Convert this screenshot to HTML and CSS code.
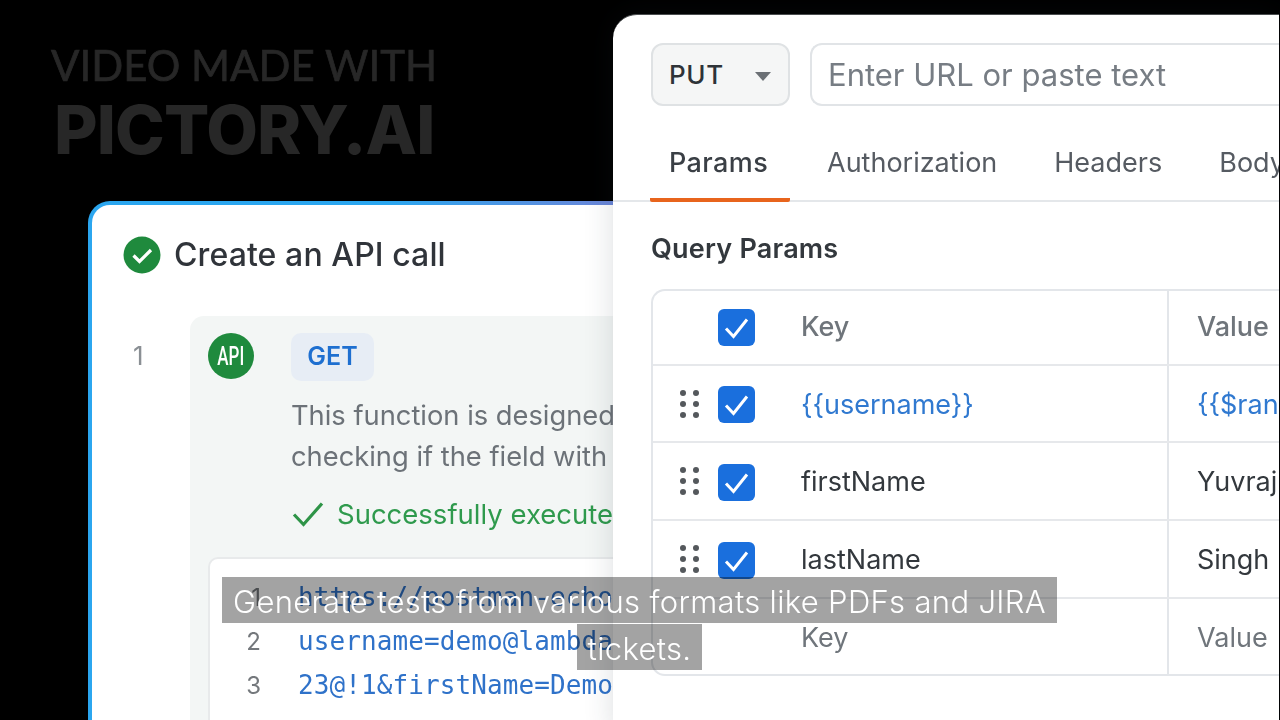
FILE: index.html
```html
<!DOCTYPE html>
<html lang="en">
<head>
<meta charset="utf-8">
<title>Generate tests</title>
<link rel="stylesheet" href="styles.css">
</head>
<body>
<main class="stage">
  <div class="watermark">
    <div class="wm-top">VIDEO MADE WITH</div>
    <div class="wm-bottom">PICTORY.AI</div>
  </div>

  <section class="card">
    <header class="card-head">
      <svg class="head-check" viewBox="0 0 38 38"><circle cx="19" cy="19" r="18.500" fill="#1f8a3d"/><path d="M10.500 19.500l6 6L28 14" fill="none" stroke="#fff" stroke-width="3.200"/></svg>
      <h2 class="card-title">Create an API call</h2>
    </header>
    <div class="step">
      <div class="step-num">1</div>
      <div class="step-box">
        <div class="step-top">
          <div class="api-icon"><span>API</span></div>
          <div class="get">GET</div>
        </div>
        <p class="desc">This function is designed to validate a form by<br>checking if the field with the given name exists</p>
        <div class="success">
          <svg class="ok" viewBox="0 0 32 26"><path d="M2 13.500l9.500 10L30 2.500" fill="none" stroke="#2e9447" stroke-width="3.200"/></svg>
          <span>Successfully executed the request</span>
        </div>
        <div class="code">
          <div class="code-line"><span class="ln">1</span><span class="src">https://postman-echo.com/get?</span></div>
          <div class="code-line"><span class="ln">2</span><span class="src">username=demo@lambdatest.com&amp;password=</span></div>
          <div class="code-line"><span class="ln">3</span><span class="src">23@!1&amp;firstName=Demo&amp;lastName=User</span></div>
        </div>
      </div>
    </div>
  </section>

  <section class="panel">
    <div class="request">
      <div class="method">PUT<svg class="caret" viewBox="0 0 18 10"><path d="M0 0h18L9 10z" fill="#6b7075"/></svg></div>
      <div class="url">Enter URL or paste text</div>
    </div>
    <nav class="tabs">
      <div class="tab active">Params</div>
      <div class="tab">Authorization</div>
      <div class="tab">Headers</div>
      <div class="tab">Body</div>
    </nav>
    <h3 class="qp">Query Params</h3>
    <div class="table">
      <div class="row head-row">
        <div class="c-key"><span class="box"><svg viewBox="0 0 37 37"><path d="M8 19.500l7.500 8L29 10.500" fill="none" stroke="#fff" stroke-width="3"/></svg></span><span class="k muted strong">Key</span></div>
        <div class="c-val muted strong">Value</div>
      </div>
      <div class="row first">
        <div class="c-key"><span class="grip"><i></i><i></i><i></i><i></i><i></i><i></i></span><span class="box"><svg viewBox="0 0 37 37"><path d="M8 19.500l7.500 8L29 10.500" fill="none" stroke="#fff" stroke-width="3"/></svg></span><span class="k var">{{username}}</span></div>
        <div class="c-val var">{{$randomFirstName}}</div>
      </div>
      <div class="row">
        <div class="c-key"><span class="grip"><i></i><i></i><i></i><i></i><i></i><i></i></span><span class="box"><svg viewBox="0 0 37 37"><path d="M8 19.500l7.500 8L29 10.500" fill="none" stroke="#fff" stroke-width="3"/></svg></span><span class="k">firstName</span></div>
        <div class="c-val">Yuvraj</div>
      </div>
      <div class="row">
        <div class="c-key"><span class="grip"><i></i><i></i><i></i><i></i><i></i><i></i></span><span class="box"><svg viewBox="0 0 37 37"><path d="M8 19.500l7.500 8L29 10.500" fill="none" stroke="#fff" stroke-width="3"/></svg></span><span class="k">lastName</span></div>
        <div class="c-val">Singh</div>
      </div>
      <div class="row last">
        <div class="c-key"><span class="k muted">Key</span></div>
        <div class="c-val muted">Value</div>
      </div>
    </div>
  </section>

  <div class="caption"><span>Generate tests from various formats like PDFs and JIRA tickets.</span></div>
</main>
</body>
</html>
```

FILE: styles.css
```css
* { box-sizing: border-box; }
html, body { margin: 0; height: 100%; background: #000; }
body { overflow: hidden; }
.stage {
  position: relative;
  width: 1280px;
  height: 720px;
  overflow: hidden;
  background: #000;
  font-family: Inter, "Liberation Sans", sans-serif;
}
.card, .panel, .watermark { filter: blur(.45px); }

.watermark { position: absolute; left: 51px; top: 40px; color: #272727; }
.wm-top { font-family: Lato, sans-serif; font-size: 42px; line-height: 50px; -webkit-text-stroke: .7px #272727; }
.wm-bottom { font-family: Inter, sans-serif; font-weight: 800; font-size: 67px; line-height: 76px; margin: 2px 0 0 3px; letter-spacing: -.9px; }

.card {
  position: absolute;
  left: 88px;
  top: 201px;
  width: 760px;
  height: 560px;
  background: linear-gradient(#fff, #fff) padding-box, linear-gradient(90deg, #2ba6ef 0, #2ba6ef 300px, #6c86d8 525px) border-box;
  border: 4px solid transparent;
  border-right: 0;
  border-radius: 22px 0 0 0;
}
.card-head { display: flex; align-items: center; gap: 13px; padding: 31px 0 0 31px; }
.head-check { width: 38px; height: 38px; flex: none; }
.card-title { margin: 0; font-size: 32px; line-height: 38px; font-weight: 500; letter-spacing: .1px; color: #30343a; }
.step { display: flex; margin-top: 42px; }
.step-num { width: 98px; flex: none; padding: 24px 0 0 41px; font-size: 26px; line-height: 32px; color: #8a8f94; }
.step-box { flex: 1; min-width: 0; background: #f3f6f5; border-radius: 14px 0 0 0; padding: 17px 0 0 18px; height: 420px; }
.step-top { display: flex; gap: 37px; align-items: flex-start; }
.api-icon {
  width: 46px; height: 46px; border-radius: 50%;
  background: #1f8a3d; color: #fff;
  display: flex; align-items: center; justify-content: center;
  font-family: Roboto, sans-serif; font-size: 25px; font-weight: 500;
}
.api-icon span { display: inline-block; transform: scaleX(.68); }
.get {
  width: 83px; height: 48px; border-radius: 10px;
  background: #e7edf5; color: #1e6fd0;
  display: flex; align-items: center; justify-content: center;
  font-size: 25px; font-weight: 600; padding-bottom: 3px;
}
.desc { margin: 14px 0 0 83px; font-size: 27.300px; line-height: 41px; color: #6c7278; white-space: nowrap; }
.success { display: flex; align-items: center; gap: 13px; margin: 20px 0 0 84px; font-size: 27.500px; line-height: 34px; color: #2f9a4d; white-space: nowrap; }
.ok { width: 32px; height: 26px; flex: none; }
.code { margin-top: 26px; background: #fff; border: 2px solid #e8eaeb; border-radius: 10px 0 0 0; padding: 16px 0 0 0; height: 300px; }
.code-line { display: flex; height: 44px; align-items: center; white-space: nowrap; }
.ln { width: 88px; flex: none; text-align: right; padding-right: 37px; font-size: 24px; color: #74787c; }
.src { font-family: "DejaVu Sans Mono", monospace; font-size: 26px; letter-spacing: .1px; color: #2f72c9; }

.panel {
  position: absolute;
  left: 613px;
  top: 14px;
  width: 666px;
  height: 720px;
  background: #fff;
  border-radius: 24px 0 0 0;
  border-top: 1px solid #4a4d4f;
  box-shadow: 0 0 30px rgba(40, 50, 60, .16);
  overflow: hidden;
}
.request { display: flex; gap: 20px; padding: 28px 0 0 38px; }
.method {
  width: 139px; height: 63px; flex: none;
  background: #f5f6f6; border: 2px solid #dfe2e4; border-radius: 12px;
  display: flex; align-items: center; padding-left: 16px;
  font-size: 26px; font-weight: 500; color: #2e3338; letter-spacing: .6px;
}
.caret { width: 16px; height: 9px; margin-left: 31px; margin-top: 3px; }
.url {
  flex: 1; height: 63px;
  border: 2px solid #e1e4e7; border-right: 0; border-radius: 12px 0 0 12px;
  display: flex; align-items: center; padding-left: 16px;
  font-size: 31px; color: #777d84; white-space: nowrap;
}
.tabs { display: flex; margin-top: 34px; padding-left: 37px; border-bottom: 2px solid #e4e7ea; height: 62px; white-space: nowrap; }
.tab { flex: none; font-size: 27px; line-height: 46px; color: #565b62; margin-right: 57px; height: 62px; }
.tab.active { width: 140px; margin-right: 37px; padding-left: 19px; color: #3a3f45; font-weight: 500; letter-spacing: .4px; border-bottom: 4px solid #e8641c; border-radius: 0 0 2px 2px; }
.qp { margin: 30px 0 0 38px; font-size: 27px; line-height: 34px; font-weight: 600; letter-spacing: .2px; color: #33383d; }
.table { margin: 23px 0 0 38px; border: 2px solid #e3e6ea; border-right: 0; border-radius: 14px 0 0 14px; }
.row { display: flex; height: 78px; border-bottom: 2px solid #e6e8eb; font-size: 27px; color: #33383d; white-space: nowrap; }
.head-row { height: 75px; }
.row.first { height: 77px; }
.row.last { border-bottom: 0; height: 75px; }
.c-key { width: 516px; flex: none; position: relative; display: flex; align-items: center; padding: 2px 0 0 65px; border-right: 2px solid #e3e6ea; }
.c-val { padding: 2px 0 1px 28px; display: flex; align-items: center; }
.head-row .c-key { padding-top: 0; }
.head-row .c-val { padding-top: 0; padding-bottom: 2px; }
.head-row .k { padding-bottom: 3px; }
.box { width: 37px; height: 37px; background: #1a6fdd; border-radius: 6px; flex: none; }
.box svg { display: block; width: 37px; height: 37px; }
.k { margin-left: 46px; padding-bottom: 1px; }
.c-key > .k:first-child { margin-left: 83px; }
.muted { color: #6f757b; }
.strong { font-weight: 500; }
.var { color: #3079d0; }
.grip {
  position: absolute; left: 27px; top: 50%; margin-top: -14px;
  display: grid; grid-template-columns: 6px 6px; column-gap: 7px; row-gap: 5px;
}
.grip i { width: 6px; height: 6px; background: #54585c; border-radius: 50%; display: block; }

.caption {
  position: absolute; left: 222px; top: 578px; width: 835px;
  text-align: center;
  font-size: 31px; line-height: 47px; font-weight: 300; letter-spacing: .33px; color: #fff;
}
.caption span {
  background: rgba(0, 0, 0, .36);
  padding: 6px 11px 3px;
  -webkit-box-decoration-break: clone;
  box-decoration-break: clone;
}
```
